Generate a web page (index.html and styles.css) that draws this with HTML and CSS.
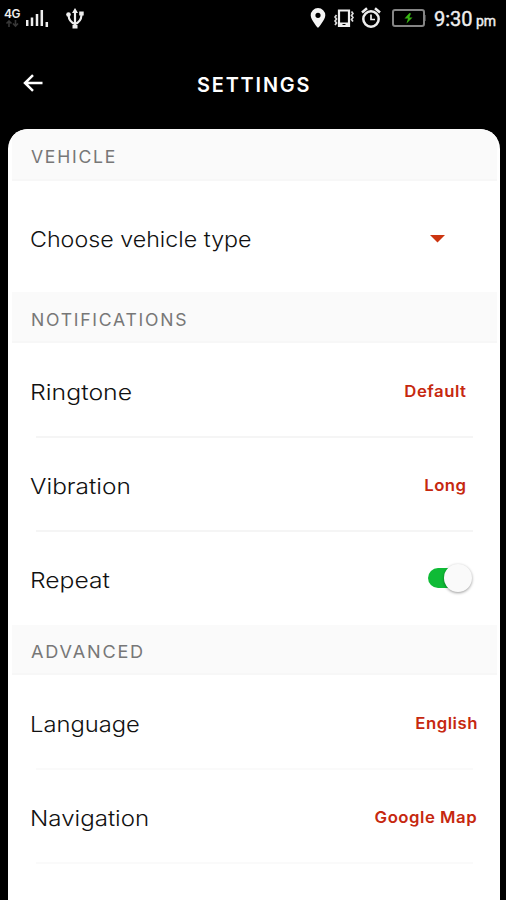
FILE: index.html
```html
<!DOCTYPE html>
<html lang="en">
<head>
<meta charset="utf-8">
<title>Settings</title>
<link rel="stylesheet" href="styles.css">
</head>
<body>
<div class="status">
  <div class="network">
    <span class="gen">4G</span>
    <svg width="14" height="8" viewBox="0 0 14 8"><path d="M4 7V1M1.500 3.500L4 1l2.500 2.500M10.500 0v6M8 3.500L10.500 6 13 3.500" fill="none" stroke="#383838" stroke-width="1.600"/></svg>
  </div>
  <svg class="signal" width="23" height="18" viewBox="0 0 23 18"><path d="M1.200 17v-6M6 17V8.500M11 17V5M15.800 17V1M20.800 18v-5" fill="none" stroke="#eee" stroke-width="2.500"/></svg>
  <svg class="usb" width="18" height="22" viewBox="0 0 18 22"><g fill="none" stroke="#eee" stroke-width="2.200"><path d="M9 19V3M9 16Q3 14 2.500 7M9 16Q15 14 15.500 7"/></g><g fill="#eee"><path d="M9 0l3 5H6z"/><circle cx="2.500" cy="6.500" r="2.300"/><path d="M13.200 3.500h4.500v4h-4.500zM6.500 17h5v3.500h-5z"/></g></svg>
  <svg class="pin" width="16" height="20" viewBox="0 0 16 20"><path fill="#f5f5f5" fill-rule="evenodd" d="M8 0a7.300 7.300 0 0 0-7.300 7.300C.7 12 8 20 8 20s7.300-8 7.300-12.700A7.300 7.300 0 0 0 8 0zm0 4.700a2.600 2.600 0 1 1 0 5.200 2.600 2.600 0 0 1 0-5.200z"/></svg>
  <svg class="phone" width="20" height="19" viewBox="0 0 20 19"><path d="M5 1.500h10v15.500H5z" fill="none" stroke="#eee" stroke-width="2.200"/><path d="M5 13.500h10v4H5z" fill="#eee"/><path d="M8.500 15.500h3" stroke="#000"/><path d="M2.500 6l-1.500 2 1.500 2-1.500 2 1.500 2-1.500 2M17.500 2.500l1.500 2-1.500 2 1.500 2-1.500 2 1.500 2" fill="none" stroke="#ddd" stroke-width="1.700"/></svg>
  <svg class="alarm" width="20" height="21" viewBox="0 0 20 21"><g fill="none" stroke="#eee"><circle cx="10" cy="12" r="7.700" stroke-width="2.500"/><path d="M1 5.500L6 1.200M19 5.500L14 1.200" stroke-width="2.500"/><path d="M10 7.500v5h4" stroke-width="1.700"/></g></svg>
  <svg class="battery" width="34" height="18" viewBox="0 0 34 18"><rect x="1" y="1" width="31" height="16" rx="2" fill="none" stroke="#858585" stroke-width="2"/><path d="M32.500 6v6" stroke="#858585" stroke-width="2"/><path fill="#37b312" d="M17.500 4L12.500 9.500h3.500L14.500 14.500l6-6H17.300L19 4.500z"/></svg>
  <span class="time">9:30</span><span class="pm">pm</span>
</div>
<header class="bar">
  <svg class="back" width="20" height="18" viewBox="0 0 20 18"><path d="M19.500 9H2M10 1.200L2 9l8 7.800" fill="none" stroke="#fff" stroke-width="2.500"/></svg>
  <h1><span class="t settings">SETTINGS</span></h1>
</header>
<main class="card">
  <h2><span class="t vehicle">VEHICLE</span></h2>
  <div class="row tall"><span class="t choose">Choose vehicle type</span><i class="caret"></i></div>
  <h2 class="notif"><span class="t notifications">NOTIFICATIONS</span></h2>
  <div class="row line"><span class="t ringtone">Ringtone</span><b class="t">Default</b></div>
  <div class="row line"><span class="t vibration">Vibration</span><b class="t">Long</b></div>
  <div class="row"><span class="t repeat">Repeat</span><i class="toggle"></i></div>
  <h2 class="adv"><span class="t advanced">ADVANCED</span></h2>
  <div class="row line wide faint"><span class="t language">Language</span><b class="t">English</b></div>
  <div class="row line wide faint"><span class="t navigation">Navigation</span><b class="t">Google Map</b></div>
</main>
</body>
</html>
```
FILE: styles.css
```css
* { box-sizing: border-box; }
body {
  margin: 0;
  height: 900px;
  overflow: hidden;
  background: #000;
  font-family: Inter, "Liberation Sans", sans-serif;
  display: flex;
  flex-direction: column;
}
svg { display: block; flex: none; }
.status { height: 38px; flex: none; display: flex; align-items: flex-start; padding-left: 4px; color: #eee; }
.network { width: 17px; margin-top: 8px; }
.gen { display: block; font-size: 12px; line-height: 11px; font-weight: 600; letter-spacing: -.6px; }
.network svg { margin: 1px 0 0 1px; }
.signal { margin: 9px 0 0 5px; }
.usb { margin: 8px 0 0 17px; }
.pin { margin: 8px 0 0 226px; }
.phone { margin: 9px 0 0 8px; }
.alarm { margin: 7px 0 0 7px; }
.battery { margin: 9px 0 0 11px; }
.time, .pm { font-family: Roboto, sans-serif; line-height: 24px; -webkit-text-stroke: .4px #eee; }
.time { width: 39px; margin: 7px 0 0 8px; font-size: 20px; }
.pm { margin: 9px 0 0 3px; font-size: 14px; }
.bar { height: 91px; flex: none; position: relative; display: flex; align-items: center; justify-content: center; }
.back { position: absolute; left: 23px; top: 36px; }
h1 { margin: 3px 0 0; color: #fff; font-size: 19.500px; line-height: 24px; font-weight: 600; letter-spacing: 1.800px; }
.t { display: inline-block; white-space: nowrap; transform-origin: left center; }
.settings { transform: scaleX(1.02); }
.vehicle, .notifications { transform: scaleX(1.033); }
.advanced { transform: scaleX(1.065); }
.choose { transform: scaleX(1.057); }
.ringtone { transform: scaleX(1.13); }
.vibration { transform: scaleX(1.11); }
.repeat { transform: scaleX(1.12); }
.language { transform: scaleX(1.08); }
.navigation { transform: scaleX(1.095); }
.card { flex: 1; margin: 0 6.500px 0 7.500px; background: #fff; border-radius: 20px 20px 0 0; overflow: hidden; }
h2 { height: 52px; margin: 0 3px 0 4px; padding: 6px 0 0 19.500px; display: flex; align-items: center; background: #fafafa; border-bottom: 2px solid #f7f7f7; color: #777; font-size: 17px; font-weight: 400; letter-spacing: 1.700px; }
.notif { height: 51px; }
.adv { height: 50px; }
.row { height: 94px; padding: 4px 33px 0 22.500px; display: flex; align-items: center; justify-content: space-between; position: relative; font-size: 22px; color: #111; font-weight: 300; }
.tall { height: 111px; }
.line::after { content: ""; position: absolute; left: 28px; right: 27px; bottom: -1px; height: 2px; background: #f5f5f5; }
.faint::after { background: #fafafa; }
.wide { padding-right: 22px; }
.row b { margin-top: -2px; color: #c6280f; font-size: 16px; font-weight: 600; letter-spacing: .5px; transform: scaleX(1.045); transform-origin: right center; }
.caret { width: 16px; height: 8px; margin-right: 21px; background: #cc3510; clip-path: polygon(0 0, 100% 0, 50% 100%); }
.toggle { width: 46px; height: 32px; margin: -4px -6px 0 0; position: relative; }
.toggle::before { content: ""; position: absolute; left: 1px; top: 6px; width: 36px; height: 20px; border-radius: 10px; background: #0fbb36; }
.toggle::after { content: ""; position: absolute; right: 1px; top: 2px; width: 28px; height: 28px; border-radius: 50%; background: #fafafa; box-shadow: 0 1px 3px #0006; }
```
